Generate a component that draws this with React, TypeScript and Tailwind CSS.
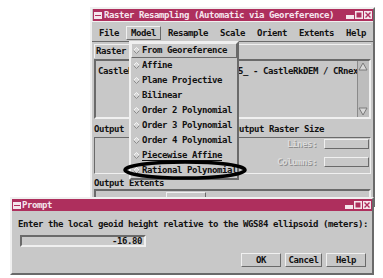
const mono = "font-['DejaVu_Sans_Mono','Liberation_Mono',monospace] font-bold text-[9px] tracking-[-0.42px] leading-none"
const raised = 'border-t-[#f0f0f0] border-l-[#f0f0f0] border-b-[#6a6a6a] border-r-[#6a6a6a]'
const sunken = 'border-t-[#6a6a6a] border-l-[#6a6a6a] border-b-[#f0f0f0] border-r-[#f0f0f0]'

const models = [
  'From Georeference',
  'Affine',
  'Plane Projective',
  'Bilinear',
  'Order 2 Polynomial',
  'Order 3 Polynomial',
  'Order 4 Polynomial',
  'Piecewise Affine',
  'Rational Polynomial',
]

const menus = ['File', 'Model', 'Resample', 'Scale', 'Orient', 'Extents']

function WinIcon() {
  return (
    <svg width="8" height="7" viewBox="0 0 8 7" className="shrink-0">
      <rect x="0" y="0" width="8" height="7" fill="#f4e6ec" />
      <rect x="1" y="3" width="6" height="1" fill="#ae2f5d" />
    </svg>
  )
}

function WinButtons() {
  return (
    <div className="ml-auto flex gap-[1px]">
      <svg width="8" height="8" viewBox="0 0 8 8">
        <rect x="0" y="4" width="8" height="4" fill="#f4e6ec" />
      </svg>
      <svg width="8" height="8" viewBox="0 0 8 8">
        <rect x="0.75" y="0.75" width="6.5" height="6.5" fill="none" stroke="#f4e6ec" strokeWidth="1.5" />
      </svg>
      <svg width="8" height="8" viewBox="0 0 8 8">
        <rect x="0" y="0" width="8" height="8" fill="#f4e6ec" />
        <path d="M1.5 1.5 L6.5 6.5 M6.5 1.5 L1.5 6.5" stroke="#ae2f5d" strokeWidth="1.4" />
      </svg>
    </div>
  )
}

function TitleBar({ title, gap }: { title: string; gap: string }) {
  return (
    <div className="flex h-[12px] items-center bg-[#ae2f5d] pl-[1px] pr-[1px]">
      <WinIcon />
      <span className={`${gap} whitespace-nowrap text-[#f6e6ee]`}>{title}</span>
      <WinButtons />
    </div>
  )
}

function Diamond() {
  return (
    <svg width="7" height="7" viewBox="0 0 7 7" className="shrink-0">
      <polygon points="3.5,0.5 6.5,3.5 3.5,6.5 0.5,3.5" fill="#d6d6d6" />
      <polyline points="0.5,3.5 3.5,0.5 6.5,3.5" fill="none" stroke="#f6f6f6" />
      <polyline points="0.5,3.5 3.5,6.5 6.5,3.5" fill="none" stroke="#8c8c8c" />
    </svg>
  )
}

function Arrow({ down }: { down?: boolean }) {
  return (
    <svg width="10" height="9" viewBox="0 0 10 9">
      <polygon
        points={down ? '1,1 9,1 5,8' : '5,1 9,8 1,8'}
        fill="#d8d8d8"
        stroke="#7a7a7a"
        strokeWidth="1"
      />
    </svg>
  )
}

function MainWindow() {
  return (
    <div className={`absolute left-[90px] top-[7px] h-[200px] w-[285px] border-2 bg-[#c8c8c8] ${raised}`}>
      <div className="pl-[1px]">
        <TitleBar title="Raster Resampling (Automatic via Georeference)" gap="ml-[2px]" />
      </div>

      <div className={`flex h-[21px] items-start gap-[2px] whitespace-nowrap border-y px-[2px] pt-[4px] ${raised}`}>
        {menus.map((m) => (
          <div
            key={m}
            className={`flex h-[14px] items-center border px-[4px] text-[#111] ${
              m === 'Model' ? raised : 'border-transparent'
            }`}
          >
            {m}
          </div>
        ))}
        <div className="ml-auto flex h-[14px] items-center border border-transparent px-[4px] text-[#111]">Help</div>
      </div>

      <div className="flex flex-col px-[2px] pt-[2px] text-[#111]">
        <div className={`flex h-[14px] items-center whitespace-nowrap border-l border-t px-[1px] ${raised}`}>
          Raster to Resample:
        </div>

        <div className={`mt-[1px] flex h-[60px] border-2 ${sunken}`}>
          <div className="flex-1 overflow-hidden whitespace-nowrap pl-[2px] pt-[6px]">
            CastleRkDEM.rvc / CRDEM_CRDE5_ - CastleRkDEM / CRnext elevation
          </div>
          <div className="flex w-[12px] flex-col justify-between border-l border-l-[#8a8a8a] bg-[#bdbdbd] py-[1px]">
            <Arrow />
            <Arrow down />
          </div>
        </div>

        <div className="mt-[3px] flex h-[15px] items-center whitespace-nowrap">
          <span className="w-[140px]">Output Projection</span>
          <span>Output Raster Size</span>
        </div>

        <div className="flex h-[37px] gap-[4px]">
          <div className={`w-[134px] border ${sunken}`} />
          <div className={`flex flex-1 flex-col gap-[8px] border pr-[1px] pt-[1px] ${sunken}`}>
            {['Lines:', 'Columns:'].map((l) => (
              <div key={l} className="flex h-[10px] items-center justify-end gap-[7px]">
                <span className="text-[#dcdcdc] [text-shadow:1px_1px_0_#8e8e8e]">{l}</span>
                <div className={`h-[10px] w-[45px] border ${raised}`} />
              </div>
            ))}
          </div>
        </div>

        <div className="mt-[3px] flex h-[12px] items-center">Output Extents</div>
        <div className={`flex h-[20px] items-start border-2 pt-[1px] ${sunken}`}>
          <div className="w-[70px]" />
          <div className={`h-[10px] w-[40px] border ${raised}`} />
        </div>
      </div>
    </div>
  )
}

function ModelMenu() {
  return (
    <div className={`absolute left-[129px] top-[41px] w-[110px] border-2 bg-[#c8c8c8] ${raised}`}>
      {models.map((m, i) => (
        <div
          key={m}
          className={`flex h-[15px] items-center gap-[2px] whitespace-nowrap border pl-[1px] text-[#111] ${
            i === 0 ? raised : 'border-transparent'
          }`}
        >
          <Diamond />
          <span className={m === 'Piecewise Affine' ? 'underline underline-offset-[2px]' : ''}>{m}</span>
        </div>
      ))}
    </div>
  )
}

function PromptWindow() {
  return (
    <div className={`absolute left-[10px] top-[197px] h-[78px] w-[364px] border-2 bg-[#c8c8c8] ${raised}`}>
      <TitleBar title="Prompt" gap="ml-[1px]" />
      <div className="flex flex-col px-[6px] pt-[7px] text-[#111]">
        <div className="flex h-[12px] items-center whitespace-nowrap">
          Enter the local geoid height relative to the WGS84 ellipsoid (meters):
        </div>
        <div
          className={`ml-[2px] mt-[5px] flex h-[12px] w-[126px] items-center justify-end border-2 bg-[#cbcbcb] pr-[2px] ${sunken}`}
        >
          -16.80
        </div>
        <div className="mt-[6px] flex justify-end gap-[4px] pr-[-2px]">
          {[
            ['OK', 'w-[40px]'],
            ['Cancel', 'w-[37px]'],
            ['Help', 'w-[40px]'],
          ].map(([t, w]) => (
            <div key={t} className={`flex h-[14px] ${w} items-center justify-center border ${raised}`}>
              {t}
            </div>
          ))}
        </div>
      </div>
    </div>
  )
}

export default function App() {
  return (
    <div className={`relative h-[278px] w-[383px] overflow-hidden bg-white ${mono}`}>
      <MainWindow />
      <ModelMenu />
      <svg className="pointer-events-none absolute left-0 top-0" width="383" height="278">
        <ellipse cx="185" cy="170" rx="60" ry="8" fill="none" stroke="#000" strokeWidth="3.5" />
      </svg>
      <PromptWindow />
    </div>
  )
}
